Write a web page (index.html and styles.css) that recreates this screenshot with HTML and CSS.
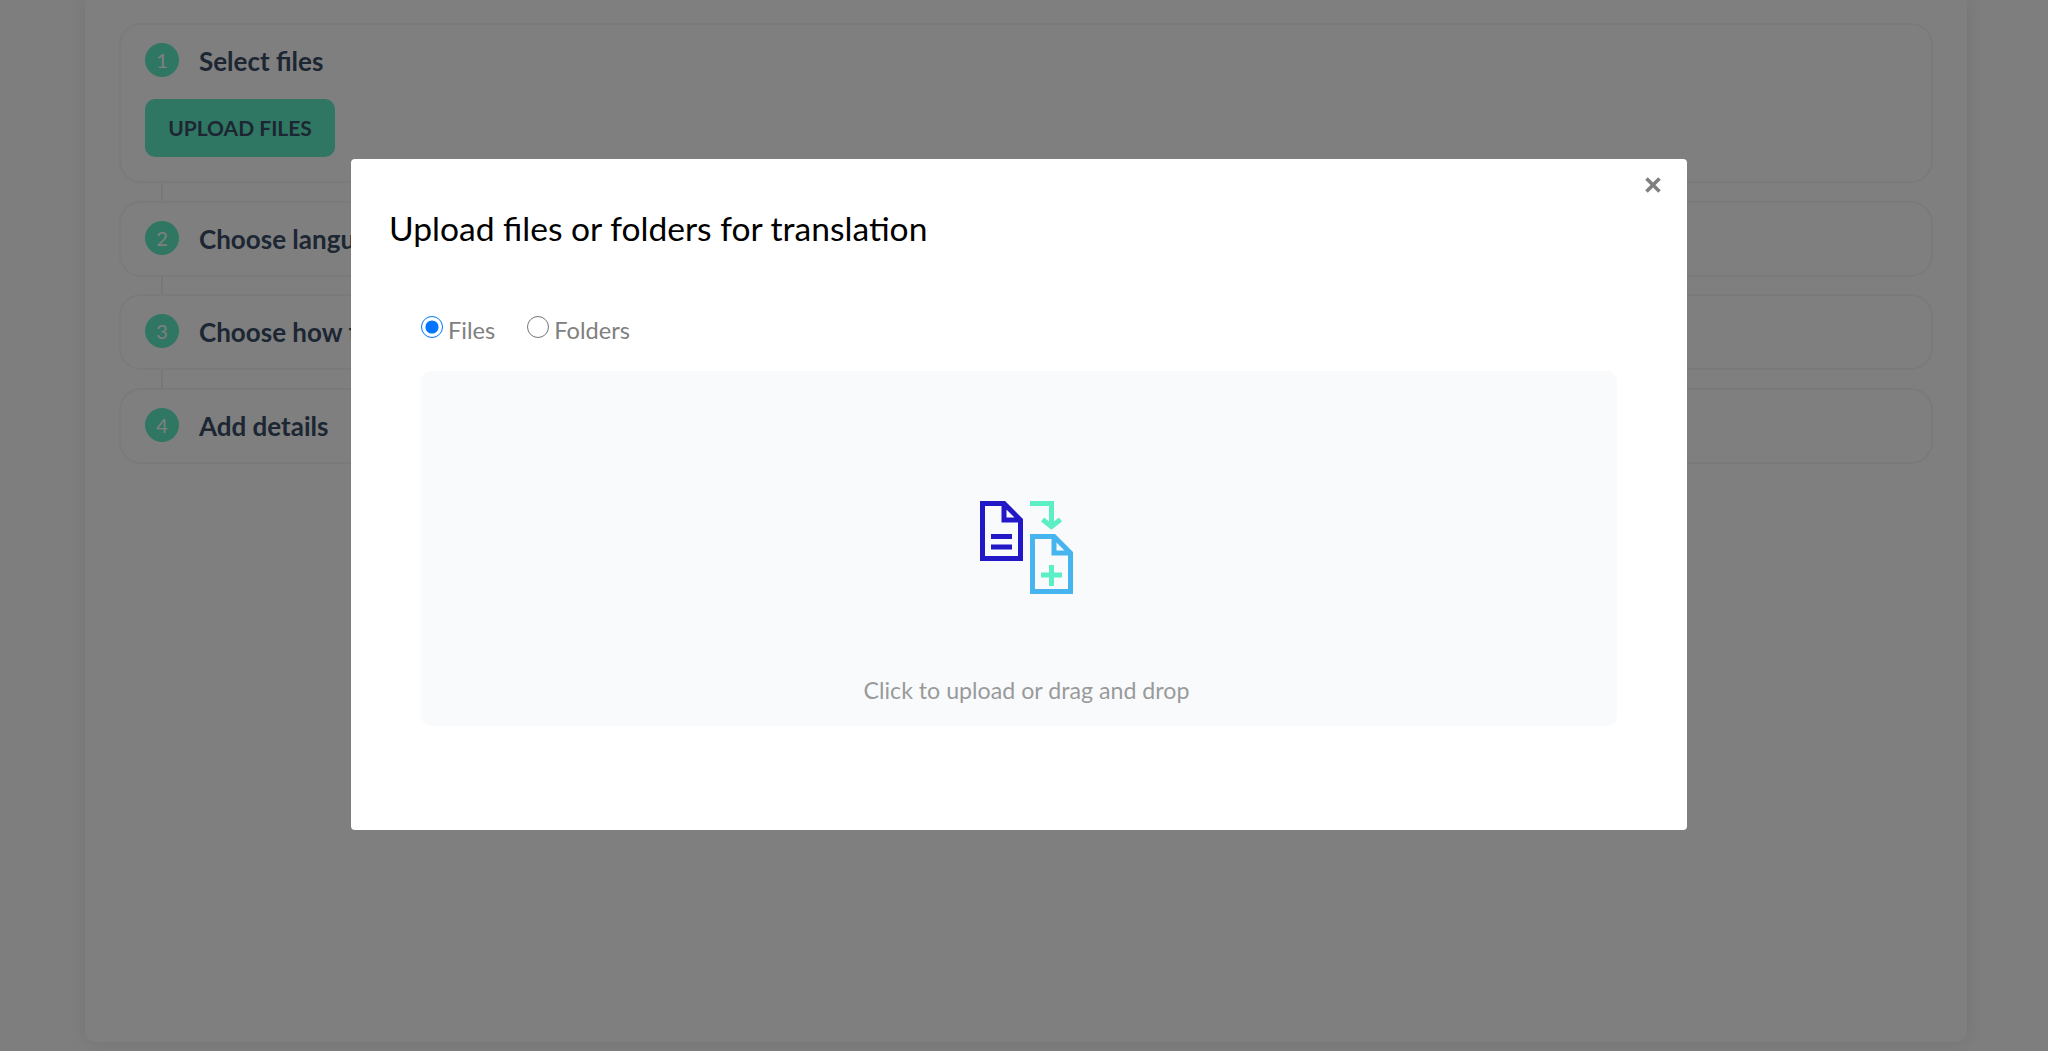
FILE: index.html
```html
<!DOCTYPE html>
<html lang="en">
<head>
  <meta charset="UTF-8" />
  <title>Upload files</title>
  <link rel="stylesheet" href="styles.css">
</head>
<body>

<main class="panel">
  <section class="step">
    <div class="step-head">
      <span class="step-num">1</span>
      <h3>Select files</h3>
    </div>
    <button class="upload-btn" type="button">UPLOAD FILES</button>
  </section>
  <div class="step-line"></div>
  <section class="step">
    <div class="step-head">
      <span class="step-num">2</span>
      <h3>Choose languages</h3>
    </div>
  </section>
  <div class="step-line"></div>
  <section class="step">
    <div class="step-head">
      <span class="step-num">3</span>
      <h3>Choose how to translate</h3>
    </div>
  </section>
  <div class="step-line"></div>
  <section class="step">
    <div class="step-head">
      <span class="step-num">4</span>
      <h3>Add details</h3>
    </div>
  </section>
</main>

<div class="backdrop">
  <div class="modal">
    <button class="close-btn" type="button" aria-label="Close">
      <svg width="16" height="16" viewBox="0 0 16 16">
        <path d="M1.500 1.500L14.500 14.500M14.500 1.500L1.500 14.500" stroke="#808080" stroke-width="3.6" fill="none" />
      </svg>
    </button>
    <h2 class="modal-title">Upload files or folders for translation</h2>
    <div class="modal-body">
      <div class="radio-row">
        <label class="radio"><input type="radio" name="kind" checked /><span>Files</span></label>
        <label class="radio"><input type="radio" name="kind" /><span>Folders</span></label>
      </div>
      <div class="dropzone">
        <svg class="drop-icon" width="93" height="94" viewBox="60 31 93 94" fill="none" stroke-width="5">
          <path d="M62.500 33.500H84L100.500 50V88.500H62.500Z M84 33.500V50H100.500" stroke="#2318c8" />
          <path d="M71 66.500H92 M71 77H92" stroke="#2318c8" />
          <path d="M110 33.500H131.500V55 M122.500 49.500L131.500 56.500L140.500 49.500" stroke="#5cefc6" />
          <path d="M112.500 66.500H134L150.500 83V121.500H112.500Z M134 66.500V83H150.500" stroke="#46b4ee" />
          <path d="M121 105H142 M131.500 95V116" stroke="#5cefc6" />
        </svg>
        <p class="drop-text">Click to upload or drag and drop</p>
      </div>
    </div>
  </div>
</div>

</body>
</html>
```

FILE: styles.css
```css
* { box-sizing: border-box; }
html, body { height: 100%; }
body { margin: 0; overflow: hidden; background: #fdfdfd; font-family: Lato, "Open Sans", sans-serif; }

.panel { width: 1882px; height: 1042px; margin: 0 0 0 85px; padding: 23px 34px 0; background: #ffffff; border-radius: 0 0 10px 10px; box-shadow: 0 0 20px rgba(0,0,0,0.1); }
.step { border: 2px solid #f3f4f6; border-radius: 22px; padding: 18px 24px 20px; }
.step-line { width: 2px; height: 17.5px; margin-left: 42px; background: #eceef2; }
.step-head { display: flex; align-items: center; gap: 20px; height: 34px; }
.step-head h3 { margin: 2px 0 0; font-size: 26px; font-weight: 700; line-height: 34px; color: #3a4c66; }
.step-num { display: flex; align-items: center; justify-content: center; width: 34px; height: 34px; border-radius: 50%; background: #5fefc5; color: #ffffff; font-size: 20px; }
.upload-btn { display: block; width: 190px; height: 58px; margin: 22px 0 4px; padding: 0 0 2px; border: none; border-radius: 10px; background: #5fefc5; color: #3a4c66; font-family: inherit; font-size: 21px; font-weight: 700; }

.backdrop { position: fixed; inset: 0; background: rgba(0,0,0,0.5); display: flex; justify-content: center; align-items: flex-start; }
.modal { position: relative; width: 1336px; height: 671px; margin: 159px 0 0 -10px; padding: 46px 38px; background: #ffffff; border-radius: 4px; }
.modal-title { margin: 0; font-size: 33.6px; font-weight: 400; line-height: 46px; color: #000000; }
.close-btn { position: absolute; top: 18px; right: 26px; padding: 0; border: none; background: none; line-height: 0; }

.modal-body { padding: 64px 32px 0; }
.radio-row { display: flex; gap: 32px; height: 37px; margin-bottom: 19px; }
.radio { display: flex; align-items: flex-start; gap: 5px; font-size: 23.6px; line-height: 30px; color: #808080; }
.radio input { width: 22px; height: 22px; margin: 1px 0 0; }
.dropzone { display: flex; flex-direction: column; align-items: center; width: 1196px; height: 355px; padding: 130px 0 0 15px; background: #f9fafc; border-radius: 10px; }
.drop-text { margin: 80px 0 0; font-size: 23.2px; line-height: 30px; color: #9a9a9a; }
```
